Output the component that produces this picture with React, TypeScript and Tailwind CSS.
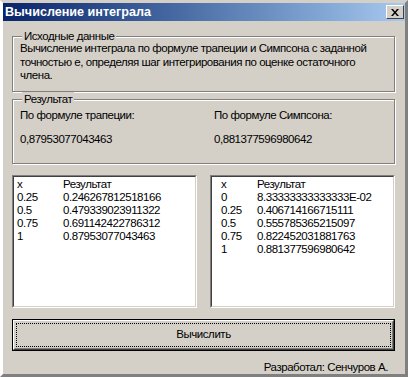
import React from "react";

const font = { fontFamily: '"Liberation Sans", Arial, sans-serif' };

function GroupBox({ label, className, children }: { label: string; className: string; children: React.ReactNode }) {
  return (
    <div className={"relative border border-[#808080] shadow-[inset_1px_1px_0_#ffffff,1px_1px_0_#ffffff] " + className}>
      <span className="absolute left-[9px] top-[-8px] bg-[#D4D0C8] px-[2px] leading-[14px]">{label}</span>
      {children}
    </div>
  );
}

function ListBox({ rows, className, pad, col }: { rows: [string, string][]; className: string; pad: string; col: string }) {
  return (
    <div className={"border border-t-[#808080] border-l-[#808080] border-r-white border-b-white " + className}>
      <div className={"h-full border border-t-[#404040] border-l-[#404040] border-r-[#D4D0C8] border-b-[#D4D0C8] bg-white pt-[1px] " + pad}>
        {rows.map(([a, b], i) => (
          <div key={i} className="flex leading-[13px]">
            <span className={col}>{a}</span>
            <span>{b}</span>
          </div>
        ))}
      </div>
    </div>
  );
}

export default function App() {
  return (
    <div
      className="w-[408px] h-[377px] bg-[#D4D0C8] text-[11.5px] text-black border-[3px] border-t-[#D4D0C8] border-l-[#ffffff] border-r-[#808080] border-b-[#808080] flex flex-col"
      style={font}
    >
      <div className="h-[18px] bg-gradient-to-r from-[#0A246A] to-[#A6CAF0] flex items-center justify-between pl-[2px] pr-[1px]">
        <span className="text-white font-bold text-[12.6px] leading-[18px]">Вычисление интеграла</span>
        <div className="w-[18px] h-[14px] bg-[#D4D0C8] border border-t-white border-l-white border-r-[#404040] border-b-[#404040] flex items-center justify-center">
          <svg width="8" height="7" viewBox="0 0 8 7">
            <path d="M0 0h2l2 2.5L6 0h2L5 3.5 8 7H6L4 4.5 2 7H0l3-3.5z" fill="#000" />
          </svg>
        </div>
      </div>
      <div className="flex flex-col pl-[9px] pr-[10px] tracking-[-0.45px]">
        <GroupBox label="Исходные данные" className="mt-[15px] h-[56px] pl-[7px] pt-[5px]">
          <div className="leading-[13.5px] pr-[20px]">
            Вычисление интеграла по формуле трапеции и Симпсона с заданной точностью е, определяя шаг интегрирования по оценке остаточного члена.
          </div>
        </GroupBox>
        <GroupBox label="Результат" className="mt-[7px] h-[65px]">
          <div className="grid grid-cols-2 pl-[7px] pt-[9px] leading-[13px]">
            <span>По формуле трапеции:</span>
            <span className="pl-[7px]">По формуле Симпсона:</span>
            <span className="mt-[11px]">0,87953077043463</span>
            <span className="mt-[11px] pl-[7px]">0,881377596980642</span>
          </div>
        </GroupBox>
        <div className="mt-[11px] flex justify-between">
          <ListBox
            className="w-[185px] h-[133px]"
            pad="pl-[3px]"
            col="w-[46px]"
            rows={[
              ["x", "Результат"],
              ["0.25", "0.246267812518166"],
              ["0.5", "0.479339023911322"],
              ["0.75", "0.691142422786312"],
              ["1", "0.87953077043463"],
            ]}
          />
          <ListBox
            className="w-[185px] h-[133px]"
            pad="pl-[9px]"
            col="w-[36px]"
            rows={[
              ["x", "Результат"],
              ["0", "8.33333333333333E-02"],
              ["0.25", "0.406714166715111"],
              ["0.5", "0.555785365215097"],
              ["0.75", "0.822452031881763"],
              ["1", "0.881377596980642"],
            ]}
          />
        </div>
        <div className="mt-[11px] h-[32px] border border-black">
          <div className="h-full border border-t-white border-l-white border-r-[#404040] border-b-[#404040]">
            <div className="h-full border border-t-[#D4D0C8] border-l-[#D4D0C8] border-r-[#808080] border-b-[#808080] p-[1px]">
              <div className="h-full border border-dotted border-black flex items-center justify-center">Вычислить</div>
            </div>
          </div>
        </div>
        <div className="mt-[9px] text-right pr-[7px] leading-[14px]">Разработал: Сенчуров А.</div>
      </div>
    </div>
  );
}
